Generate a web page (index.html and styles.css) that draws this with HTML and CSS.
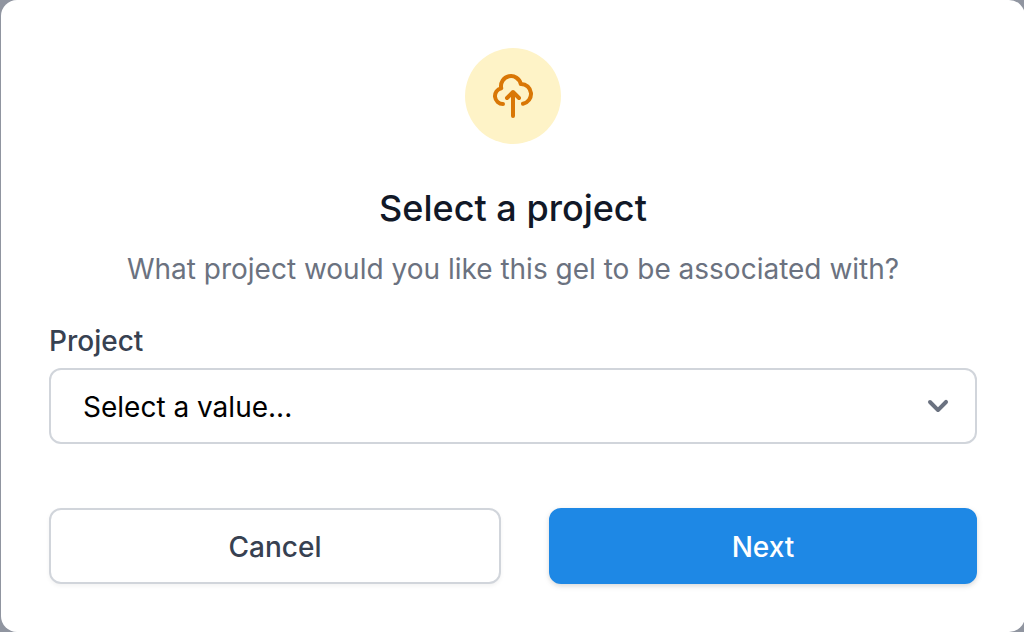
FILE: index.html
```html
<!DOCTYPE html>
<html lang="en">
<head>
<meta charset="utf-8">
<meta name="viewport" content="width=device-width, initial-scale=1">
<title>Select a project</title>
<link rel="stylesheet" href="styles.css">
</head>
<body class="backdrop">
<main class="dialog" role="dialog" aria-labelledby="dialog-title">
  <div class="badge">
    <svg class="badge-icon" viewBox="0 0 24 24" fill="none" stroke="currentColor" stroke-width="2" stroke-linecap="round" stroke-linejoin="round" aria-hidden="true">
      <path d="M7 16a4 4 0 01-.88-7.903A5 5 0 1115.9 6L16 6a5 5 0 011 9.9M15 13l-3-3m0 0l-3 3m3-3v12"/>
    </svg>
  </div>
  <h1 class="title" id="dialog-title">Select a project</h1>
  <p class="description">What project would you like this gel to be associated with?</p>
  <form class="form">
    <label class="label" for="project">Project</label>
    <div class="select-wrap">
      <select class="select" id="project">
        <option>Select a value...</option>
      </select>
      <svg class="chevron" viewBox="0 0 20 20" fill="currentColor" aria-hidden="true">
        <path d="M5.293 7.293a1 1 0 011.414 0L10 10.586l3.293-3.293a1 1 0 111.414 1.414l-4 4a1 1 0 01-1.414 0l-4-4a1 1 0 010-1.414z"/>
      </svg>
    </div>
    <div class="actions">
      <button class="button button-cancel" type="button">Cancel</button>
      <button class="button button-next" type="button">Next</button>
    </div>
  </form>
</main>
</body>
</html>
```
FILE: styles.css
```css
*,
*::before,
*::after {
  box-sizing: border-box;
}

.backdrop {
  margin: 0;
  padding-left: 1px;
  overflow: hidden;
  background: #9095a0;
  font-family: Inter, "Liberation Sans", sans-serif;
  font-size: 28px;
  line-height: 42px;
}

.dialog {
  margin-right: -1px;
  padding: 48px;
  border-radius: 16px;
  background: #fff;
}

.badge {
  display: flex;
  align-items: center;
  justify-content: center;
  width: 96px;
  height: 96px;
  margin: 0 auto;
  border-radius: 50%;
  background: #fef3c7;
  color: #d97706;
}

.badge-icon {
  width: 48px;
  height: 48px;
}

.title {
  margin: 40px 0 0;
  color: #111827;
  font-size: 36px;
  font-weight: 500;
  line-height: 48px;
  text-align: center;
}

.description {
  margin: 16px 0 0;
  color: #6b7280;
  text-align: center;
}

.form {
  margin-top: 30px;
}

.label {
  display: block;
  color: #374151;
  font-weight: 500;
}

.select-wrap {
  position: relative;
  margin-top: 6px;
}

.select {
  display: block;
  width: 100%;
  height: 76px;
  padding: 2px 80px 0 32px;
  border: 2px solid #d1d5db;
  border-radius: 12px;
  background: #fff;
  color: #000;
  font: inherit;
  appearance: none;
}

.chevron {
  position: absolute;
  top: 18px;
  right: 19px;
  width: 40px;
  height: 40px;
  color: #6b7280;
  pointer-events: none;
}

.actions {
  display: grid;
  grid-template-columns: 452fr 428fr;
  gap: 48px;
  margin-top: 64px;
}

.button {
  padding: 16px 32px 14px;
  border: 2px solid transparent;
  border-radius: 12px;
  font: inherit;
  font-weight: 500;
  box-shadow: 0 2px 4px rgb(0 0 0 / 5%);
}

.button-cancel {
  border-color: #d1d5db;
  background: #fff;
  color: #374151;
}

.button-next {
  border-color: #1e88e5;
  background: #1e88e5;
  color: #fff;
  box-shadow: 0 2px 6px rgb(0 0 0 / 10%), 0 2px 4px rgb(0 0 0 / 6%);
}
```
